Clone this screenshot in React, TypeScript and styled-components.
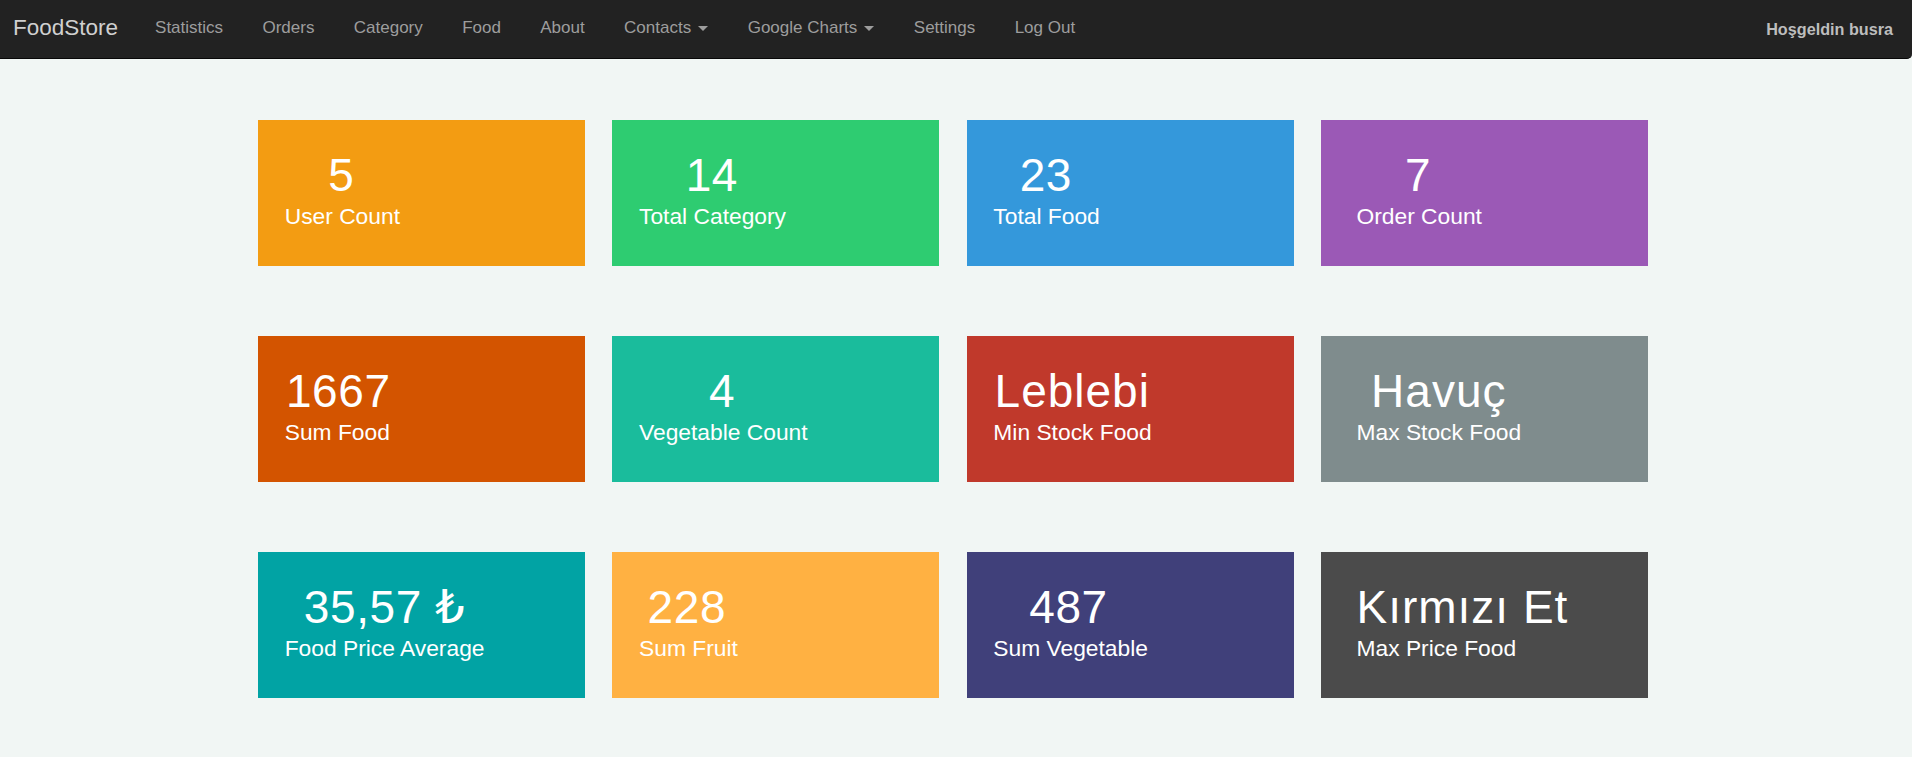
import React from "react";
import styled, { createGlobalStyle } from "styled-components";

const GlobalStyle = createGlobalStyle`
  html, body {
    margin: 0;
    padding: 0;
    background: #f1f6f4;
    font-family: "Liberation Sans", Arial, "DejaVu Sans", sans-serif;
  }
  * { box-sizing: border-box; }
`;

const Navbar = styled.nav`
  display: flex;
  align-items: flex-start;
  height: 59px;
  background: #222222;
  border-bottom: 1px solid #080808;
  border-bottom-right-radius: 5px;
`;

const Brand = styled.a`
  padding: 15.3px 17.3px 0 13px;
  font-size: 22.5px;
  line-height: 25px;
  color: #d0d0d0;
  text-decoration: none;
`;

const NavList = styled.ul`
  display: flex;
  margin: 0;
  padding: 0;
  list-style: none;
`;

const NavLink = styled.a`
  display: block;
  padding: 17px 19.7px 0;
  font-size: 17px;
  line-height: 22px;
  color: #9d9d9d;
  text-decoration: none;
  white-space: nowrap;
`;

const Caret = styled.span`
  display: inline-block;
  width: 0;
  height: 0;
  margin-left: 2.4px;
  vertical-align: middle;
  border-top: 5px solid #9d9d9d;
  border-left: 5px solid transparent;
  border-right: 5px solid transparent;
`;

const Spacer = styled.div`
  flex: 1;
`;

const Welcome = styled.p`
  margin: 0;
  padding: 18.5px 19px 0 0;
  font-size: 16.2px;
  line-height: 20px;
  font-weight: bold;
  color: #bdbdbd;
`;

const Main = styled.main`
  padding: 61px 0 40px 258px;
`;

const Grid = styled.div`
  display: grid;
  grid-template-columns: repeat(4, 327px);
  column-gap: 27.33px;
  row-gap: 70.5px;
`;

const Card = styled.div<{ $bg: string }>`
  height: 145.5px;
  padding: 29px 0 0 25.5px;
  background: ${(p) => p.$bg};
  color: #ffffff;
`;

const Value = styled.div<{ $indent: number; $word: boolean }>`
  padding-left: ${(p) => p.$indent}px;
  font-size: 46px;
  line-height: 52px;
  letter-spacing: ${(p) => (p.$word ? "1px" : "0.6px")};
  white-space: nowrap;
`;

const Label = styled.div<{ $indent: number }>`
  margin-top: 2.3px;
  padding-left: ${(p) => p.$indent}px;
  font-size: 22.8px;
  line-height: 26px;
  white-space: nowrap;
`;

type Stat = {
  value: string;
  label: string;
  bg: string;
  indent: number;
  labelIndent?: number;
  word?: boolean;
};

const stats: Stat[] = [
  { value: "5", label: "User Count", bg: "#f39c12", indent: 44.7 },
  { value: "14", label: "Total Category", bg: "#2ecc71", indent: 47.8 },
  { value: "23", label: "Total Food", bg: "#3498db", indent: 27.5 },
  { value: "7", label: "Order Count", bg: "#9b59b6", indent: 58.4, labelIndent: 10 },
  { value: "1667", label: "Sum Food", bg: "#d35400", indent: 2.4 },
  { value: "4", label: "Vegetable Count", bg: "#1abc9c", indent: 71.2 },
  { value: "Leblebi", label: "Min Stock Food", bg: "#c0392b", indent: 2.4, word: true },
  { value: "Havuç", label: "Max Stock Food", bg: "#7f8c8d", indent: 24.6, labelIndent: 10, word: true },
  { value: "35,57 ₺", label: "Food Price Average", bg: "#01a3a4", indent: 20.3 },
  { value: "228", label: "Sum Fruit", bg: "#ffb142", indent: 9.7 },
  { value: "487", label: "Sum Vegetable", bg: "#40407a", indent: 37.1 },
  { value: "Kırmızı Et", label: "Max Price Food", bg: "#4b4b4b", indent: 10, labelIndent: 10, word: true },
];

const links: { text: string; dropdown?: boolean }[] = [
  { text: "Statistics" },
  { text: "Orders" },
  { text: "Category" },
  { text: "Food" },
  { text: "About" },
  { text: "Contacts", dropdown: true },
  { text: "Google Charts", dropdown: true },
  { text: "Settings" },
  { text: "Log Out" },
];

export default function App() {
  return (
    <>
      <GlobalStyle />
      <Navbar>
        <Brand href="#">FoodStore</Brand>
        <NavList>
          {links.map((l) => (
            <li key={l.text}>
              <NavLink href="#">
                {l.text}
                {l.dropdown && (
                  <>
                    {" "}
                    <Caret />
                  </>
                )}
              </NavLink>
            </li>
          ))}
        </NavList>
        <Spacer />
        <Welcome>Hoşgeldin busra</Welcome>
      </Navbar>
      <Main>
        <Grid>
          {stats.map((s) => (
            <Card key={s.label} $bg={s.bg}>
              <Value $indent={s.indent} $word={!!s.word}>
                {s.value}
              </Value>
              <Label $indent={s.labelIndent ?? 1.2}>{s.label}</Label>
            </Card>
          ))}
        </Grid>
      </Main>
    </>
  );
}
